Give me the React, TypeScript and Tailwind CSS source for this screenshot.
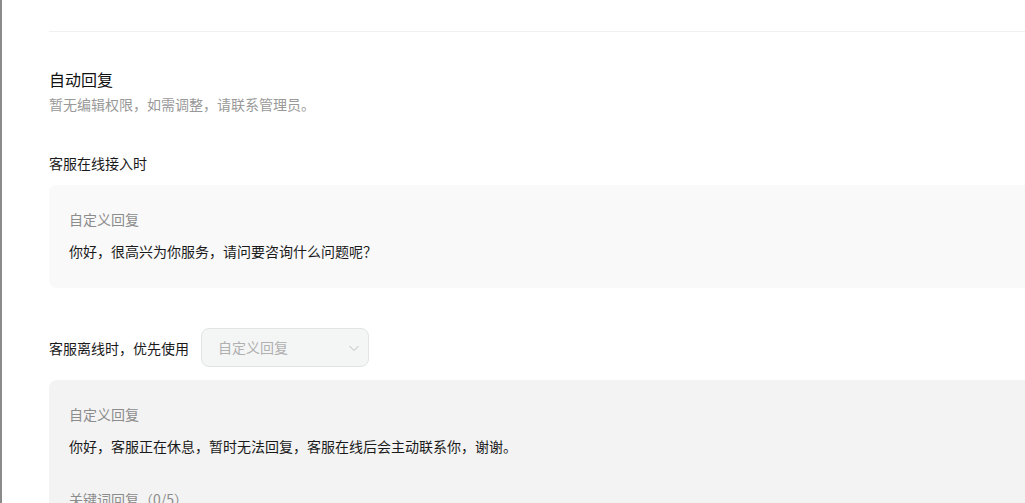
import * as React from "react"

const font = { fontFamily: '"Noto Sans CJK SC", "Noto Sans", sans-serif' }

// Read-only reply preview box
const ReplyBox: React.FC<{
  label: string
  text: string
  className?: string
  children?: React.ReactNode
}> = ({ label, text, className, children }) => {
  return (
    <div className={"rounded-l-lg px-5 pt-6 " + (className ?? "")}>
      <div className="text-[14px] leading-5 text-[#8c8c8c]">{label}</div>
      <div className="mt-3 text-[14px] leading-5 text-[#1a1a1a]">{text}</div>
      {children}
    </div>
  )
}

const ChevronDown = () => (
  <svg width="12" height="12" viewBox="0 0 12 12" fill="none">
    <path d="M1.5 4l4.5 4.5L10.5 4" stroke="#bdbdbd" strokeWidth="1" />
  </svg>
)

export default function App() {
  return (
    <div className="flex h-[503px] w-full overflow-hidden bg-white" style={font}>
      <div className="w-[2px] shrink-0 bg-[#8a8a8a]" />
      <div className="flex-1 pl-[47px]">
        <div className="h-[32px] border-b border-[#f0f0f0]" />

        <div className="mt-[35px] text-[16px] leading-6 text-[#111]">自动回复</div>
        <div className="mt-[3px] text-[14px] leading-5 text-[#999]">
          暂无编辑权限，如需调整，请联系管理员。
        </div>

        <div className="mt-[39px] text-[14px] leading-5 text-[#1a1a1a]">客服在线接入时</div>
        <ReplyBox
          className="mt-3 h-[103px] bg-[#f9f9f9]"
          label="自定义回复"
          text="你好，很高兴为你服务，请问要咨询什么问题呢？"
        />

        <div className="mt-[40px] flex items-center gap-3">
          <span className="text-[14px] leading-5 text-[#1a1a1a]">客服离线时，优先使用</span>
          <div className="flex h-[39px] w-[168px] items-center justify-between rounded-lg border border-[#e2e4e4] bg-[#f4f5f5] pl-4 pr-[8px]">
            <span className="text-[14px] text-[#b0b0b0]">自定义回复</span>
            <ChevronDown />
          </div>
        </div>

        <ReplyBox
          className="mt-[13px] h-[200px] bg-[#f3f3f3]"
          label="自定义回复"
          text="你好，客服正在休息，暂时无法回复，客服在线后会主动联系你，谢谢。"
        >
          <div className="mt-[33px] text-[14px] leading-5 text-[#8c8c8c]">关键词回复（0/5）</div>
        </ReplyBox>
      </div>
    </div>
  )
}
